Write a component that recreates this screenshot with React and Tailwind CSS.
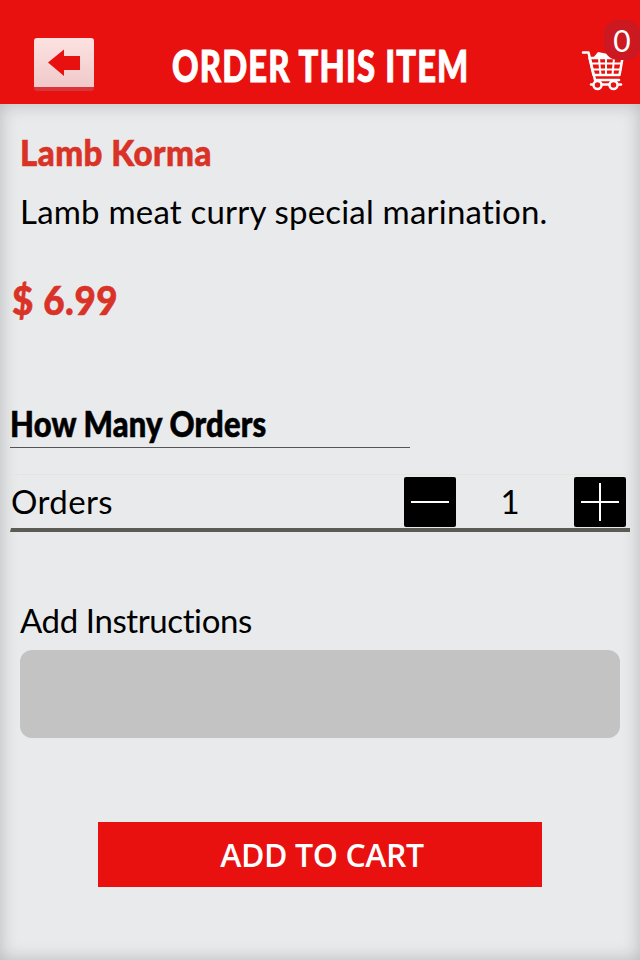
import React from 'react';

const futura = "font-['Lato',sans-serif]";

const CartIcon = () => (
  <svg width="44" height="44" viewBox="0 0 44 44" fill="none" stroke="#fff" strokeLinecap="round" strokeLinejoin="round">
    <path d="M12 7 L17 1 L27 3 L29 6 Z" fill="#fff" stroke="none" />
    <path d="M2 1.5 H7.5 L14 29 H38" strokeWidth="2.5" />
    <path d="M8.5 7 H41.5 L38.5 24 H12.5 Z" strokeWidth="2.5" />
    <path d="M10 12.5 H40.5 M11 18.5 H39.5 M18 7 L19.5 24 M25 7 V24 M33 7 L31.5 24" strokeWidth="2" />
    <path d="M10 33.5 H40" strokeWidth="2.5" />
    <circle cx="16.5" cy="34" r="4" fill="#e8110f" strokeWidth="2.5" />
    <circle cx="32.5" cy="34" r="4" fill="#e8110f" strokeWidth="2.5" />
  </svg>
);

const App = () => {
  return (
    <div className="w-[640px] h-[960px] flex flex-col bg-[#e9eaec] overflow-hidden">
      {/* Header */}
      <div className="h-[104px] shrink-0 bg-[#e8110f] flex items-start relative">
        <button className="ml-[34px] mt-[38px] w-[60px] h-[53px] rounded-[3px] bg-gradient-to-b from-[#fde2e2] to-[#f0c9c9] border-b-[4px] border-[#d8353a] flex items-center justify-center">
          <svg width="34" height="28" viewBox="0 0 34 28">
            <path d="M1 13.5 L17 0.5 V7 H33 V21 H17 V27 Z" fill="#e8110f" />
          </svg>
        </button>
        <h1 className={`${futura} ml-[78px] mt-[42px] text-[43px] leading-[48px] font-black text-white [-webkit-text-stroke:1px_white] tracking-[1.5px] scale-x-[0.762] origin-left whitespace-nowrap`}>
          ORDER THIS ITEM
        </h1>
        <div className="absolute left-[581px] top-[51px]">
          <CartIcon />
        </div>
        <div className="absolute left-[604px] top-[20px] w-[36px] h-[40px] rounded-[14px] bg-[#cc1821] flex items-center justify-center">
          <span className="font-['Lato',sans-serif] text-[30px] leading-none text-white">0</span>
        </div>
      </div>

      {/* Content */}
      <div className="flex-1 flex flex-col shadow-[inset_0_0_18px_rgba(0,0,0,0.22)]">
        <h2 className={`${futura} ml-[20px] mt-[28px] text-[36px] leading-[40px] font-black text-[#d93226] [-webkit-text-stroke:0.6px_#d93226] tracking-[0.5px] scale-x-[0.92] origin-left whitespace-nowrap`}>
          Lamb Korma
        </h2>
        <p className={`${futura} ml-[20px] mt-[16px] text-[33px] leading-[46px] text-black tracking-[0.2px] whitespace-nowrap`}>
          Lamb meat curry special marination.
        </p>
        <div className={`${futura} ml-[12px] mt-[43px] text-[40px] leading-[46px] font-black text-[#d93226] [-webkit-text-stroke:0.6px_#d93226] tracking-[0.6px] scale-x-[0.92] origin-left whitespace-nowrap`}>
          $ 6.99
        </div>

        <div className="ml-[10px] mt-[77px] w-[400px] h-[48px] border-b border-[#555]">
          <span className={`${futura} block text-[36px] leading-[46px] font-black text-black [-webkit-text-stroke:0.6px_black] tracking-[0.2px] scale-x-[0.86] origin-left whitespace-nowrap`}>
            How Many Orders
          </span>
        </div>

        {/* Stepper row */}
        <div className="ml-[10px] mt-[26px] w-[620px] h-[58px] border-l border-t border-[#e4e6dc] border-b-[4px] border-b-[#5b5c56] flex items-center">
          <span className={`${futura} text-[33px] leading-none text-black tracking-[0.4px]`}>Orders</span>
          <button className="ml-auto w-[52px] h-[50px] rounded-[2px] bg-black flex items-center justify-center">
            <span className="block w-[38px] h-[2px] bg-white" />
          </button>
          <span className={`${futura} w-[118px] pr-[10px] text-center text-[33px] leading-none text-black`}>1</span>
          <button className="mr-[4px] w-[52px] h-[50px] rounded-[2px] bg-black flex items-center justify-center">
            <svg width="38" height="38" viewBox="0 0 38 38">
              <path d="M0 19 H38 M19 0 V38" stroke="#fff" strokeWidth="2" />
            </svg>
          </button>
        </div>

        <label className={`${futura} ml-[20px] mt-[65px] text-[33px] leading-[46px] text-black tracking-[-0.4px]`}>
          Add Instructions
        </label>
        <div className="ml-[20px] mt-[7px] w-[600px] h-[88px] rounded-[12px] bg-[#c3c3c3]" />

        <button className="self-start ml-[98px] mt-[84px] w-[444px] h-[65px] pl-[4px] bg-[#e8110f] text-white font-['Open_Sans',sans-serif] font-semibold text-[32px] tracking-[-0.4px] leading-none flex items-center justify-center">
          ADD TO CART
        </button>
      </div>
    </div>
  );
};

export default App;
